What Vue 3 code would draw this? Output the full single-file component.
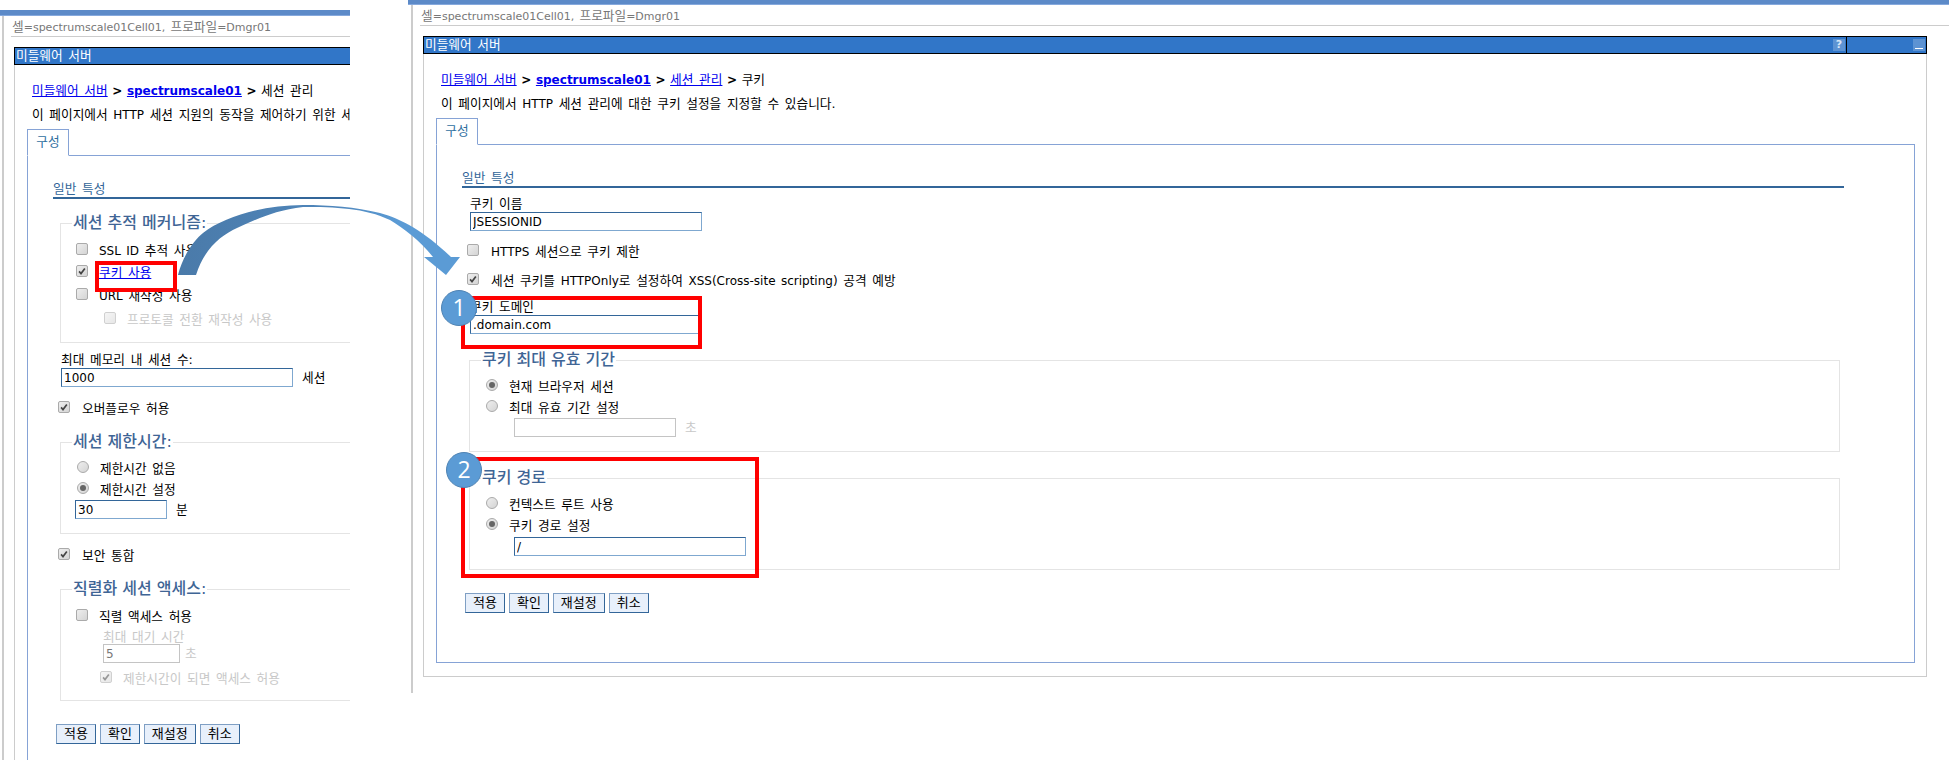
<script setup>
const buttons = ['적용', '확인', '재설정', '취소']
</script>

<template>
  <div class="canvas">
    <!-- left pasted screenshot -->
    <section class="shot shot-left">
      <div class="topbar"></div>
      <div class="frame">
        <div class="crumb">셀<span class="en">=spectrumscale01Cell01, </span>프로파일<span class="en">=Dmgr01</span></div>
        <div class="portlet">
          <div class="titlebar"><span class="title-main">미들웨어 서버</span></div>
          <div class="portlet-body">
            <div class="path"><a>미들웨어 서버</a><b> &gt; </b><a class="strong">spectrumscale01</a><b> &gt; </b><span>세션 관리</span></div>
            <div class="desc">이 페이지에서 <span class="en">HTTP</span> 세션 지원의 동작을 제어하기 위한 세</div>
            <div class="tab">구성</div>
            <div class="tab-panel">
              <div class="section">일반 특성</div>
              <div class="form">
                <fieldset class="fs mt14 pt10 pb14">
                  <legend>세션 추적 메커니즘:</legend>
                  <div class="row"><span class="cb"></span><span><span class="en">SSL ID</span> 추적 사용</span></div>
                  <div class="row mt6"><span class="cb"><svg viewBox="0 0 12 12"><path d="M2.5 6.5l2.3 2.6 4.6-6.2" /></svg></span><a>쿠키 사용</a></div>
                  <div class="row mt7"><span class="cb"></span><span><span class="en">URL</span> 재작성 사용</span></div>
                  <div class="row mt8 indent off"><span class="cb"></span><span>프로토콜 전환 재작성 사용</span></div>
                </fieldset>
                <div class="label mt9">최대 메모리 내 세션 수:</div>
                <div class="inline"><input class="field wide" value="1000" readonly /><span>세션</span></div>
                <div class="row outer mt14"><span class="cb"><svg viewBox="0 0 12 12"><path d="M2.5 6.5l2.3 2.6 4.6-6.2" /></svg></span><span>오버플로우 허용</span></div>
                <fieldset class="fs mt15 pt9 pb14">
                  <legend>세션 제한시간:</legend>
                  <div class="row radio-row"><span class="rb"></span><span>제한시간 없음</span></div>
                  <div class="row radio-row mt5"><span class="rb on"></span><span>제한시간 설정</span></div>
                  <div class="inline sub mt2"><input class="field small" value="30" readonly /><span>분</span></div>
                </fieldset>
                <div class="row outer mt14"><span class="cb"><svg viewBox="0 0 12 12"><path d="M2.5 6.5l2.3 2.6 4.6-6.2" /></svg></span><span>보안 통합</span></div>
                <fieldset class="fs mt15 pt10 pb13">
                  <legend>직렬화 세션 액세스:</legend>
                  <div class="row"><span class="cb"></span><span>직렬 액세스 허용</span></div>
                  <div class="label wait off">최대 대기 시간</div>
                  <div class="inline wait off"><input class="field tiny off-field" value="5" readonly /><span>초</span></div>
                  <div class="row late off"><span class="cb"><svg viewBox="0 0 12 12"><path d="M2.5 6.5l2.3 2.6 4.6-6.2" /></svg></span><span>제한시간이 되면 액세스 허용</span></div>
                </fieldset>
                <div class="buttons"><button v-for="b in buttons" :key="b" type="button">{{ b }}</button></div>
              </div>
            </div>
          </div>
        </div>
      </div>
    </section>

    <!-- right pasted screenshot -->
    <section class="shot shot-right">
      <div class="topbar"></div>
      <div class="frame">
        <div class="crumb">셀<span class="en">=spectrumscale01Cell01, </span>프로파일<span class="en">=Dmgr01</span></div>
        <div class="portlet">
          <div class="titlebar">
            <span class="title-main">미들웨어 서버<i class="tool">?</i></span>
            <span class="title-side"><i class="tool dash"></i></span>
          </div>
          <div class="portlet-body">
            <div class="path"><a>미들웨어 서버</a><b> &gt; </b><a class="strong">spectrumscale01</a><b> &gt; </b><a>세션 관리</a><b> &gt; </b><span>쿠키</span></div>
            <div class="desc">이 페이지에서 <span class="en">HTTP</span> 세션 관리에 대한 쿠키 설정을 지정할 수 있습니다.</div>
            <div class="tab">구성</div>
            <div class="tab-panel">
              <div class="section">일반 특성</div>
              <div class="form">
                <div class="label mt8">쿠키 이름</div>
                <input class="field wide block" value="JSESSIONID" readonly />
                <div class="row outer mt13"><span class="cb"></span><span><span class="en">HTTPS</span> 세션으로 쿠키 제한</span></div>
                <div class="row outer mt13"><span class="cb"><svg viewBox="0 0 12 12"><path d="M2.5 6.5l2.3 2.6 4.6-6.2" /></svg></span><span>세션 쿠키를 <span class="en">HTTPOnly</span>로 설정하여 <span class="en">XSS(Cross-site scripting)</span> 공격 예방</span></div>
                <div class="label mt10">쿠키 도메인</div>
                <input class="field wide block" value=".domain.com" readonly />
                <fieldset class="fs mt16 pt9 pb14">
                  <legend>쿠키 최대 유효 기간</legend>
                  <div class="row radio-row"><span class="rb on"></span><span>현재 브라우저 세션</span></div>
                  <div class="row radio-row mt5"><span class="rb"></span><span>최대 유효 기간 설정</span></div>
                  <div class="inline deep mt2 off"><input class="field mid off-field" readonly /><span>초</span></div>
                </fieldset>
                <fieldset class="fs mt16 pt9 pb13">
                  <legend>쿠키 경로</legend>
                  <div class="row radio-row"><span class="rb"></span><span>컨텍스트 루트 사용</span></div>
                  <div class="row radio-row mt5"><span class="rb on"></span><span>쿠키 경로 설정</span></div>
                  <div class="inline deep mt3"><input class="field wide" value="/" readonly /></div>
                </fieldset>
                <div class="buttons"><button v-for="b in buttons" :key="b" type="button">{{ b }}</button></div>
              </div>
            </div>
          </div>
        </div>
      </div>
    </section>

    <!-- annotations drawn over the screenshots -->
    <div class="mark mark-cookie"></div>
    <div class="mark mark-domain"></div>
    <div class="mark mark-path"></div>
    <div class="badge badge-1">1</div>
    <div class="badge badge-2">2</div>
    <svg class="arrow" width="300" height="90" viewBox="170 195 300 90">
      <defs>
        <linearGradient id="arrowFill" x1="0" x2="1" y1="0" y2="0">
          <stop offset="0" stop-color="#4a7aa9" />
          <stop offset="0.55" stop-color="#4f86bb" />
          <stop offset="0.78" stop-color="#5b9bd5" />
        </linearGradient>
      </defs>
      <path fill="url(#arrowFill)" d="M178 275C183 255 195 239 203 233C225 216 265 205 303 205C330 205 355 207 380 213C402 219 425 232 451 257L460 257L446 275L424 257L433 257C420 241 405 229 390 220C365 208 335 207 303 207C275 210 255 220 237 228C222 235 205 247 196 275Z" />
    </svg>
  </div>
</template>

<style>
html, body { margin: 0; background: #fff; }
</style>

<style scoped>
.canvas {
  position: relative;
  width: 1949px;
  height: 760px;
  overflow: hidden;
  background: #fff;
  color: #000;
  font-family: "DejaVu Sans", "Noto Sans CJK KR", sans-serif;
  font-size: 12.7px;
  line-height: 16px;
  word-spacing: 1.6px;
}
.en { font-size: 12px; }
.shot { position: absolute; overflow: hidden; background: #fff; }
.shot-left { left: -1px; top: 10px; width: 351px; height: 750px; }
.shot-right { left: 408px; top: -1px; width: 1541px; height: 694px; }
.topbar { height: 5px; background: #5c8ac8; border-bottom: 1px solid #86a9dd; }
.frame { margin-left: 3px; border-left: 2px solid #ccc; height: 800px; }
.crumb {
  margin-left: 7px;
  padding-left: 1px;
  height: 20px;
  line-height: 21px;
  border-bottom: 1px solid #ccc;
  color: #777;
  white-space: nowrap;
}
.crumb .en { font-size: 11px; }
.portlet {
  margin: 10px 0 0 10px;
  width: 1504px;
  height: 641px;
  box-sizing: border-box;
  border: 1px solid #ccc;
  border-top: 0;
}
.shot-left .portlet { height: 800px; }
.titlebar {
  display: flex;
  height: 18px;
  margin: 0 -1px;
  box-sizing: border-box;
  border: 1px solid #000;
  background: #3176c8;
  color: #fff;
  line-height: 16px;
}
.title-main {
  flex: 1;
  display: flex;
  justify-content: space-between;
  padding-left: 1px;
  border-right: 1px solid #000;
}
.title-side { width: 79px; display: flex; justify-content: flex-end; }
.tool {
  width: 12px;
  height: 12px;
  margin-top: 2px;
  margin-right: 1px;
  background: #5d93d3;
  color: #d8e6f7;
  font: bold 11px/12px "DejaVu Sans", sans-serif;
  text-align: center;
  position: relative;
}
.dash::after {
  content: "";
  position: absolute;
  left: 2px;
  right: 2px;
  bottom: 2px;
  height: 1px;
  background: #fff;
}
.portlet-body { padding: 18px 0 0 12px; white-space: nowrap; }
.path { height: 16px; margin-left: 5px; }
.path a { color: #00e; text-decoration: underline; }
.path b { font-size: 12px; font-weight: 700; word-spacing: 0.4px; }
.path .strong { font-size: 12px; font-weight: 700; }
.desc { margin: 8px 0 0 5px; height: 16px; }
.tab {
  position: relative;
  z-index: 1;
  margin-top: 6px;
  width: 42px;
  height: 27px;
  box-sizing: border-box;
  border: 1px solid #86a3d6;
  border-bottom: 1px solid #fff;
  color: #2f6f9f;
  line-height: 24px;
  text-align: center;
  margin-bottom: -1px;
  background: #fff;
}
.tab-panel {
  width: 1479px;
  height: 519px;
  box-sizing: border-box;
  border: 1px solid #86a3d6;
}
.shot-left .tab-panel { height: 700px; }
.section {
  margin: 25px 0 0 25px;
  width: 1382px;
  height: 16px;
  border-bottom: 2px solid #336699;
  color: #336699;
}
.form { margin-left: 33px; }
.label { height: 16px; }
.row { display: flex; align-items: flex-start; height: 16px; gap: 11px; }
.outer { margin-left: -3px; gap: 12px; }
.indent { margin-left: 28px; }
.radio-row { margin-left: 1px; }
.off { color: #c8c8c8; }
.cb, .rb {
  flex: none;
  width: 12px;
  height: 12px;
  box-sizing: border-box;
  border: 1px solid #aaa;
  background: linear-gradient(135deg, #eee, #d4d4d4);
}
.cb { border-radius: 2px; }
.cb svg { display: block; width: 10px; height: 10px; }
.cb path { fill: none; stroke: #444; stroke-width: 2; }
.off .cb { opacity: 0.55; }
.rb { border-radius: 50%; position: relative; }
.rb.on::after {
  content: "";
  position: absolute;
  inset: 2px;
  border-radius: 50%;
  background: #666;
}
.fs {
  margin: 0 0 0 -1px;
  padding: 0 0 0 15px;
  width: 1371px;
  box-sizing: border-box;
  border: 1px solid #e4e4e4;
  min-width: 0;
}
.fs legend {
  padding: 0 1px;
  margin-left: -4px;
  height: 20px;
  font-size: 16px;
  font-weight: 500;
  line-height: 20px;
  word-spacing: 0;
  color: #3f6595;
}
.inline { display: flex; align-items: center; gap: 9px; }
.sub { margin-left: -1px; }
.deep { margin-left: 29px; }
.field {
  box-sizing: border-box;
  height: 19px;
  padding: 0 2px;
  border: 1px solid;
  border-color: #336699 #7fa8d0 #7fa8d0 #336699;
  background: #fff;
  color: #000;
  font: 12px/16px "DejaVu Sans", sans-serif;
  outline: none;
}
.block { display: block; }
.wide { width: 232px; }
.small { width: 92px; }
.tiny { width: 77px; }
.mid { width: 162px; }
.off-field { border-color: #c4c4c4; color: #777; }
.wait { margin-left: 27px; }
.label.wait { margin-top: 4px; height: 15px; }
.inline.wait { gap: 5px; }
.late { margin: 8px 0 0 24px; }
.buttons { display: flex; gap: 4px; margin: 23px 0 0 -5px; }
.buttons button {
  height: 20px;
  padding: 0 7px;
  box-sizing: border-box;
  border: 1px solid;
  border-color: #7f9fc4 #336699 #336699 #7f9fc4;
  background: #e8f0fb;
  color: #000;
  font-family: "DejaVu Sans", "Noto Sans CJK KR", sans-serif;
  font-size: 13px;
  line-height: 18px;
}
.mt2 { margin-top: 2px; }
.mt3 { margin-top: 3px; }
.mt5 { margin-top: 5px; }
.mt6 { margin-top: 6px; }
.mt7 { margin-top: 7px; }
.mt8 { margin-top: 8px; }
.mt9 { margin-top: 9px; }
.mt10 { margin-top: 10px; }
.mt13 { margin-top: 13px; }
.mt14 { margin-top: 14px; }
.mt15 { margin-top: 15px; }
.mt16 { margin-top: 16px; }
.pt9 { padding-top: 9px; }
.pt10 { padding-top: 10px; }
.pb13 { padding-bottom: 13px; }
.pb14 { padding-bottom: 14px; }
a { color: #00e; text-decoration: underline; }

.mark { position: absolute; box-sizing: border-box; border: 4px solid #f00; }
.mark-cookie { left: 95px; top: 261px; width: 82px; height: 31px; }
.mark-domain { left: 461px; top: 296px; width: 241px; height: 53px; }
.mark-path { left: 461px; top: 457px; width: 298px; height: 121px; }
.badge {
  position: absolute;
  width: 36px;
  height: 36px;
  box-sizing: border-box;
  border: 1px solid #4f83b3;
  border-radius: 50%;
  background: #5b9bd5;
  color: #fff;
  font-family: "Open Sans", sans-serif;
  font-size: 23px;
  line-height: 33px;
  text-align: center;
}
.badge-1 { left: 441px; top: 290px; }
.badge-2 { left: 446px; top: 452px; }
.arrow { position: absolute; left: 170px; top: 195px; }
</style>
